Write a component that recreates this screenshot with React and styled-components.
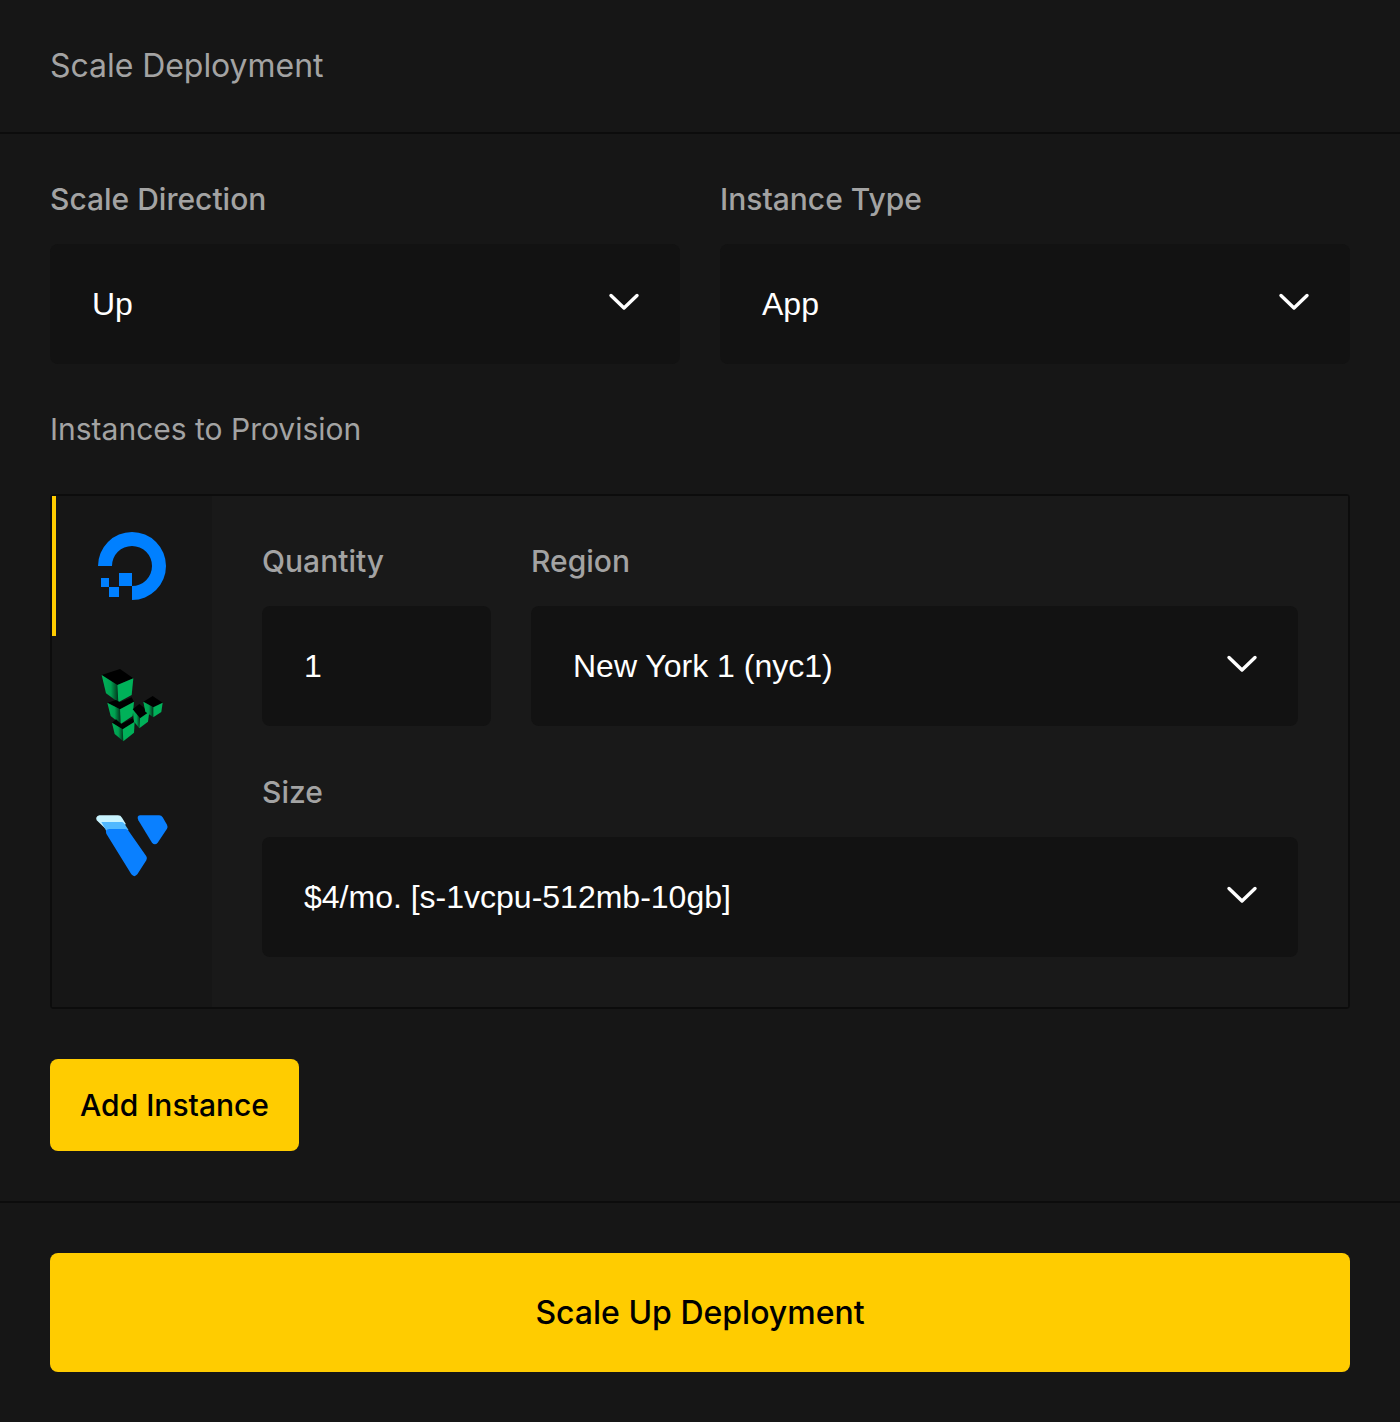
import styled, { createGlobalStyle } from "styled-components";

const GlobalStyle = createGlobalStyle`
  html, body {
    margin: 0;
    padding: 0;
    background: #161616;
  }
  * {
    box-sizing: border-box;
  }
`

const Page = styled.div`
  width: 1400px;
  height: 1422px;
  background: #161616;
  font-family: Inter, "Liberation Sans", sans-serif;
  -webkit-font-smoothing: antialiased;
`

const Header = styled.header`
  height: 134px;
  padding: 0 50px 2px;
  display: flex;
  align-items: center;
  border-bottom: 2px solid #0c0c0c;
  color: #a3a3a3;
  font-size: 32px;
  font-weight: 400;
  letter-spacing: -0.05px;
`

const Body = styled.section`
  padding: 50px 50px 50px;
  border-bottom: 2px solid #0c0c0c;
`

const Row = styled.div`
  display: grid;
  grid-template-columns: ${(p) => p.$columns || "1fr 1fr"};
  gap: 40px;
`

const Field = styled.div`
  display: flex;
  flex-direction: column;
`

const Label = styled.div`
  height: 31px;
  margin-bottom: 29px;
  line-height: 31px;
  color: #a3a3a3;
  font-size: 30px;
  font-weight: ${(p) => p.$weight || 500};
`

const Control = styled.div`
  height: 120px;
  padding: 0 42px;
  display: flex;
  align-items: center;
  justify-content: space-between;
  background: #121212;
  border-radius: 8px;
  color: #fff;
  font-family: "Liberation Sans", Arial, sans-serif;
  font-size: 32px;
  font-weight: 400;
`

const Chevron = styled.svg`
  width: 32px;
  height: 20px;
  margin-right: -2px;
  margin-bottom: 5px;
  flex: none;
`

const SectionTitle = styled(Label)`
  margin: 50px 0 49px;
`

const Panel = styled.div`
  height: 515px;
  display: flex;
  border: 2px solid #0c0c0c;
  border-radius: 4px;
`

const Tabs = styled.div`
  width: 160px;
  flex: none;
  background: #161616;
`

const Tab = styled.div`
  height: 140px;
  display: flex;
  align-items: center;
  justify-content: center;
  border-left: 4px solid ${(p) => (p.$active ? "#ffcc00" : "transparent")};
  padding-right: 4px;
`

const PanelBody = styled.div`
  flex: 1;
  padding: 50px 50px 50px;
  display: flex;
  flex-direction: column;
  gap: 51px;
  background: #191919;
`

const SmallButton = styled.button`
  display: block;
  width: 249px;
  height: 92px;
  margin-top: 50px;
  border: 0;
  border-radius: 8px;
  background: #ffcc00;
  color: #000;
  font-family: inherit;
  font-size: 30px;
  font-weight: 500;
`

const Footer = styled.footer`
  padding: 50px;
`

const WideButton = styled(SmallButton)`
  width: 100%;
  height: 119px;
  margin-top: 0;
  font-size: 32px;
`

const Arrow = () => (
  <Chevron viewBox="0 0 32 20" fill="none">
    <path d="M3 3.5 L16 16 L29 3.5" stroke="#fff" strokeWidth="3.4" strokeLinecap="round" strokeLinejoin="round" />
  </Chevron>
)

const Select = ({ children }) => (
  <Control>
    <span>{children}</span>
    <Arrow />
  </Control>
)

const DigitalOceanLogo = () => (
  <svg width="68" height="68" viewBox="0 0 68 68">
    <path d="M0 34 A34 34 0 1 1 34 68 V54 A20 20 0 1 0 14 34 Z" fill="#0080ff" />
    <rect x="21" y="41" width="13" height="13" fill="#0080ff" />
    <rect x="11" y="55" width="10" height="10" fill="#0080ff" />
    <rect x="3" y="46" width="8" height="9" fill="#0080ff" />
  </svg>
)

// left faces of the cubes fade to black towards the front edge
const LinodeLogo = () => (
  <svg width="110" height="110" viewBox="-9 3 330 330">
    <defs>
      <linearGradient id="cubeSide" x1="0" y1="0" x2="1" y2="0">
        <stop offset="0" stopColor="#00b159" />
        <stop offset="0.55" stopColor="#00a050" />
        <stop offset="1" stopColor="#02301a" />
      </linearGradient>
    </defs>
    <path d="M65 75 L120 57 L160 85 L112 105 Z" fill="#000" />
    <path d="M65 75 L112 105 L115 157 L78 130 Z" fill="url(#cubeSide)" />
    <path d="M112 105 L160 85 L155 135 L115 157 Z" fill="#00b159" />
    <path d="M82 158 L108 150 L120 157 L155 142 L162 155 L120 178 Z" fill="#000" />
    <path d="M82 158 L120 178 L122 222 L92 198 Z" fill="url(#cubeSide)" />
    <path d="M120 178 L162 155 L158 198 L122 222 Z" fill="#00b159" />
    <path d="M96 218 L108 208 L124 222 L158 205 L164 215 L128 238 Z" fill="#000" />
    <path d="M96 218 L128 238 L130 274 L104 252 Z" fill="url(#cubeSide)" />
    <path d="M128 238 L164 215 L162 248 L130 274 Z" fill="#00b159" />
    <path d="M158 178 L178 162 L208 185 L180 205 Z" fill="#000" />
    <path d="M158 178 L180 205 L178 235 L162 215 Z" fill="url(#cubeSide)" />
    <path d="M180 205 L208 185 L204 215 L178 235 Z" fill="#00b159" />
    <path d="M190 155 L218 138 L248 158 L220 172 Z" fill="#000" />
    <path d="M190 155 L220 172 L220 202 L196 185 Z" fill="url(#cubeSide)" />
    <path d="M220 172 L248 158 L244 186 L220 202 Z" fill="#00b159" />
  </svg>
)

const VultrLogo = () => (
  <svg width="110" height="100" viewBox="-9 3 330 300">
    <path d="M58 61 H114 Q122 61 126 68 L138 88 L75 100 L50 76 Q45 65 58 61 Z" fill="#c9f4ff" />
    <path d="M64 81 H126 Q130 81 134 87 L146 106 L80 110 Z" fill="#51b9ff" />
    <path d="M88 102 H136 Q142 102 146 108 L199 184 Q203 190 199 196 L172 238 Q163 249 154 238 L79 116 Q74 104 88 102 Z" fill="#0a80ff" />
    <path d="M180 61 H238 Q244 61 248 67 L261 89 Q264 95 261 101 L233 143 Q225 152 216 143 L175 76 Q169 63 180 61 Z" fill="#0a80ff" />
  </svg>
)

const App = () => {
  return (
    <Page>
      <GlobalStyle />
      <Header>Scale Deployment</Header>
      <Body>
        <Row>
          <Field>
            <Label>Scale Direction</Label>
            <Select>Up</Select>
          </Field>
          <Field>
            <Label>Instance Type</Label>
            <Select>App</Select>
          </Field>
        </Row>
        <SectionTitle $weight={400}>Instances to Provision</SectionTitle>
        <Panel>
          <Tabs>
            <Tab $active><DigitalOceanLogo /></Tab>
            <Tab><LinodeLogo /></Tab>
            <Tab><VultrLogo /></Tab>
          </Tabs>
          <PanelBody>
            <Row $columns="229px 1fr">
              <Field>
                <Label>Quantity</Label>
                <Control>1</Control>
              </Field>
              <Field>
                <Label>Region</Label>
                <Select>New York 1 (nyc1)</Select>
              </Field>
            </Row>
            <Field>
              <Label>Size</Label>
              <Select>$4/mo. [s-1vcpu-512mb-10gb]</Select>
            </Field>
          </PanelBody>
        </Panel>
        <SmallButton>Add Instance</SmallButton>
      </Body>
      <Footer>
        <WideButton>Scale Up Deployment</WideButton>
      </Footer>
    </Page>
  )
}

export default App;
